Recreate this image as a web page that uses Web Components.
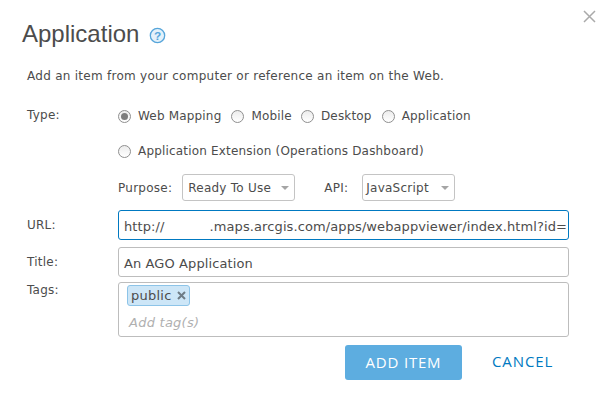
<!DOCTYPE html>
<html>
<head>
<meta charset="utf-8">
<title>Application</title>
<style>
html, body { margin: 0; padding: 0; background: #fff; }
</style>
</head>
<body>
<add-item-dialog></add-item-dialog>
<script>
const FONT = `"DejaVu Sans", Verdana, sans-serif`

class UiRadio extends HTMLElement {
	constructor() {
		super()
		this.attachShadow({ mode: 'open' }).innerHTML = `
<style>
:host { display: inline-flex; align-items: center; gap: 7px; height: 16px; font: 12px ${FONT}; color: #4c4c4c; letter-spacing: .18px; white-space: nowrap; }
i { box-sizing: border-box; width: 13px; height: 13px; border-radius: 50%; border: 1px solid #8f8f8f; background: linear-gradient(#ececec, #fff); display: flex; align-items: center; justify-content: center; }
i.on::after { content: ""; width: 7px; height: 7px; border-radius: 50%; background: #7d7d7d; }
</style>
<i class="${this.hasAttribute('checked') ? 'on' : ''}"></i><slot></slot>`
	}
}
customElements.define('ui-radio', UiRadio)

class UiSelect extends HTMLElement {
	constructor() {
		super()
		this.attachShadow({ mode: 'open' }).innerHTML = `
<style>
:host { display: inline-flex; box-sizing: border-box; align-items: center; justify-content: space-between; height: 27px; padding: 0 5px 0 5px; border: 1px solid #c4c4c4; border-radius: 3px; font: 12px ${FONT}; color: #4c4c4c; letter-spacing: .25px; white-space: nowrap; }
i { width: 0; height: 0; border: 4px solid transparent; border-top: 4px solid #a5a5a5; border-bottom: 0; }
</style>
<slot></slot><i></i>`
	}
}
customElements.define('ui-select', UiSelect)

class UiField extends HTMLElement {
	constructor() {
		super()
		this.attachShadow({ mode: 'open' }).innerHTML = `
<style>
:host { display: flex; box-sizing: border-box; align-items: center; height: 30px; padding: 2px 0 0 5px; border: 1px solid #bdbdbd; border-radius: 3px; font: 13px ${FONT}; color: #4c4c4c; white-space: pre; overflow: hidden; letter-spacing: .1px; }
:host([focused]) { border-color: #0079c1; }
</style>
<slot></slot>`
	}
}
customElements.define('ui-field', UiField)

class TagChip extends HTMLElement {
	constructor() {
		super()
		this.attachShadow({ mode: 'open' }).innerHTML = `
<style>
:host { display: inline-flex; box-sizing: border-box; align-items: center; gap: 5px; height: 21px; padding: 0 3px 0 3px; background: #cde6f7; border: 1px solid #8dc4e8; border-radius: 3px; font: 13px ${FONT}; color: #4c4c4c; }
svg { width: 9px; height: 9px; }
path { stroke: #6e7b85; stroke-width: 2; fill: none; }
</style>
<slot></slot><svg viewBox="0 0 9 9"><path d="M1 1 8 8M8 1 1 8"/></svg>`
	}
}
customElements.define('tag-chip', TagChip)

class FormRow extends HTMLElement {
	constructor() {
		super()
		this.attachShadow({ mode: 'open' }).innerHTML = `
<style>
:host { display: grid; grid-template-columns: 91px 451px; font: 12px ${FONT}; color: #4c4c4c; letter-spacing: .25px; }
.label { white-space: nowrap; padding-top: var(--label-top, 0); }
</style>
<div class="label"><slot name="label"></slot></div><div><slot></slot></div>`
	}
}
customElements.define('form-row', FormRow)

class AddItemDialog extends HTMLElement {
	constructor() {
		super()
		this.attachShadow({ mode: 'open' }).innerHTML = `
<style>
:host { display: block; position: relative; box-sizing: border-box; width: 602px; height: 418px; padding: 19px 33px 0 22px; background: #fff; font: 12px ${FONT}; color: #4c4c4c; overflow: hidden; }
.close { position: absolute; left: 583px; top: 10px; width: 13px; height: 13px; }
.close path { stroke: #aaa; stroke-width: 1.5; fill: none; }
header { display: flex; align-items: center; gap: 10px; height: 30px; }
h1 { margin: 0; font: 400 24px "Liberation Sans", Arial, sans-serif; color: #4c4c4c; }
.help { width: 17px; height: 17px; margin-top: 2px; }
.intro { margin: 20px 0 0 5px; line-height: 15px; letter-spacing: .27px; white-space: nowrap; }
.form { margin: 24px 0 0 5px; }
.types { display: flex; height: 16px; }
.ext { margin-top: 19px; height: 16px; display: flex; }
.opts { display: flex; align-items: center; margin-top: 15px; height: 27px; }
.opts span { white-space: nowrap; }
.url { margin-top: 9px; --label-top: 8px; }
.title { margin-top: 7px; --label-top: 8px; }
.tags { margin-top: 5px; --label-top: 1px; }
.tagbox { box-sizing: border-box; height: 55px; border: 1px solid #bdbdbd; border-radius: 3px; padding: 2px 0 0 8px; }
.add { margin: 9px 0 0 2px; font: italic 13px ${FONT}; color: #b0b0b0; line-height: 15px; }
.actions { display: flex; margin-top: 8px; margin-left: 318px; align-items: center; }
.primary { box-sizing: border-box; width: 117px; height: 35px; padding-bottom: 2px; background: #5dade0; border-radius: 3px; color: #fff; font: 15px "Open Sans", sans-serif; letter-spacing: .8px; display: flex; align-items: center; justify-content: center; }
.cancel { margin: -3px 0 0 30px; color: #0079c1; font: 15px "Open Sans", sans-serif; letter-spacing: .9px; }
</style>
<svg class="close" viewBox="0 0 13 13"><path d="M1 1 12 12M12 1 1 12"/></svg>
<header>
	<h1>Application</h1>
	<svg class="help" viewBox="0 0 18 18"><circle cx="9" cy="9" r="7.6" fill="#e4f1fa" stroke="#56a5da" stroke-width="1.4"/><text x="9" y="13.5" text-anchor="middle" font-family="Liberation Sans" font-weight="700" font-size="12.5" fill="#56a5da">?</text></svg>
</header>
<p class="intro">Add an item from your computer or reference an item on the Web.</p>
<div class="form">
	<form-row>
		<span slot="label">Type:</span>
		<div class="types">
			<ui-radio checked>Web Mapping</ui-radio>
			<ui-radio style="margin-left:10px">Mobile</ui-radio>
			<ui-radio style="margin-left:9px">Desktop</ui-radio>
			<ui-radio style="margin-left:10px">Application</ui-radio>
		</div>
		<div class="ext"><ui-radio>Application Extension (Operations Dashboard)</ui-radio></div>
		<div class="opts">
			<span style="margin-right:10px">Purpose:</span>
			<ui-select style="width:113px">Ready To Use</ui-select>
			<span style="margin:0 14px 0 29px">API:</span>
			<ui-select style="width:93px;padding-left:3px">JavaScript</ui-select>
		</div>
	</form-row>
	<form-row class="url">
		<span slot="label">URL:</span>
		<ui-field focused>http://<span style="display:inline-block;width:45px"></span>.maps.arcgis.com/apps/webappviewer/index.html?id=</ui-field>
	</form-row>
	<form-row class="title">
		<span slot="label">Title:</span>
		<ui-field>An AGO Application</ui-field>
	</form-row>
	<form-row class="tags">
		<span slot="label">Tags:</span>
		<div class="tagbox">
			<tag-chip>public</tag-chip>
			<div class="add">Add tag(s)</div>
		</div>
	</form-row>
	<div class="actions">
		<div class="primary">ADD ITEM</div>
		<div class="cancel">CANCEL</div>
	</div>
</div>`
	}
}
customElements.define('add-item-dialog', AddItemDialog)
</script>
</body>
</html>
